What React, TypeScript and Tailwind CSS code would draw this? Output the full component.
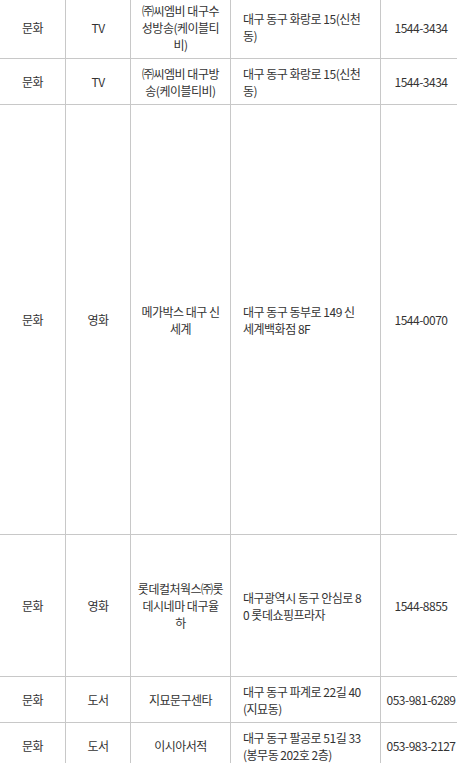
import React from "react";

type Row = {
  h: string;
  a: string;
  b: string;
  name: string[];
  addr: string[];
  tel: string;
  pad?: string;
};

const rows: Row[] = [
  { h: "h-[59px]", a: "문화", b: "TV", name: ["㈜씨엠비 대구수", "성방송(케이블티", "비)"], addr: ["대구 동구 화랑로 15(신천", "동)"], tel: "1544-3434", pad: "pt-[0px] pb-[4px]" },
  { h: "h-[46px]", a: "문화", b: "TV", name: ["㈜씨엠비 대구방", "송(케이블티비)"], addr: ["대구 동구 화랑로 15(신천", "동)"], tel: "1544-3434" },
  { h: "h-[430px]", a: "문화", b: "영화", name: ["메가박스 대구 신", "세계"], addr: ["대구 동구 동부로 149 신", "세계백화점 8F"], tel: "1544-0070" },
  { h: "h-[142px]", a: "문화", b: "영화", name: ["롯데컬처웍스㈜롯", "데시네마 대구율", "하"], addr: ["대구광역시 동구 안심로 8", "0 롯데쇼핑프라자"], tel: "1544-8855" },
  { h: "h-[46px]", a: "문화", b: "도서", name: ["지묘문구센타"], addr: ["대구 동구 파계로 22길 40", "(지묘동)"], tel: "053-981-6289" },
  { h: "h-[46px]", a: "문화", b: "도서", name: ["이시아서적"], addr: ["대구 동구 팔공로 51길 33", "(봉무동 202호 2층)"], tel: "053-983-2127" },
];

function Lines({ lines }: { lines: string[] }) {
  return (
    <div>
      {lines.map((l, i) => (
        <div key={i} className="whitespace-nowrap">
          {l}
        </div>
      ))}
    </div>
  );
}

export default function App() {
  return (
    <div
      className="w-[457px] h-[763px] overflow-hidden bg-white text-[#333] text-[12px] leading-[17px] tracking-[-0.5px]"
      style={{ fontFamily: '"Noto Sans CJK KR", "Noto Sans", sans-serif' }}
    >
      <div className="w-[462px] flex flex-col">
        {rows.map((r, i) => (
          <div key={i} className={`flex border-b border-[#c8c8c8] ${r.h}`}>
            <div className={`w-[66px] shrink-0 border-r border-[#c8c8c8] flex items-center justify-center ${r.pad ?? ""}`}>
              {r.a}
            </div>
            <div className={`w-[65px] shrink-0 border-r border-[#c8c8c8] flex items-center justify-center ${r.pad ?? ""}`}>
              {r.b}
            </div>
            <div className={`w-[100px] shrink-0 border-r border-[#c8c8c8] flex items-center justify-center text-center ${r.pad ?? ""}`}>
              <Lines lines={r.name} />
            </div>
            <div className={`w-[150px] shrink-0 border-r border-[#c8c8c8] flex items-center pl-[12px] ${r.pad ?? ""}`}>
              <Lines lines={r.addr} />
            </div>
            <div className={`w-[81px] shrink-0 border-r border-[#c8c8c8] flex items-center justify-center ${r.pad ?? ""}`}>
              {r.tel}
            </div>
          </div>
        ))}
      </div>
    </div>
  );
}
